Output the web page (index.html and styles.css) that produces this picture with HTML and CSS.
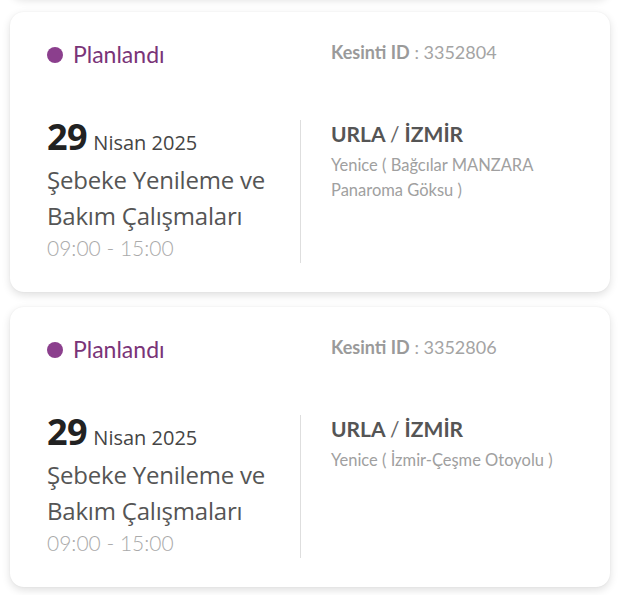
FILE: index.html
```html
<!DOCTYPE html>
<html lang="tr">
<head>
<meta charset="utf-8">
<title>Kesintiler</title>
<link rel="stylesheet" href="styles.css">
</head>
<body>
<div class="list">
  <div class="card card-prev"></div>

  <div class="card">
    <div class="status"><span class="dot"></span><span class="status-text">Planlandı</span></div>
    <div class="kid"><b>Kesinti ID</b> : 3352804</div>
    <div class="when">
      <div class="date"><span class="day">29</span> <span class="month">Nisan 2025</span></div>
      <div class="title">Şebeke Yenileme ve Bakım Çalışmaları</div>
      <div class="time">09:00 - 15:00</div>
    </div>
    <div class="where">
      <div class="city">URLA <span class="slash">/</span> İZMİR</div>
      <div class="addr">Yenice ( Bağcılar MANZARA Panaroma Göksu )</div>
    </div>
  </div>

  <div class="card">
    <div class="status"><span class="dot"></span><span class="status-text">Planlandı</span></div>
    <div class="kid"><b>Kesinti ID</b> : 3352806</div>
    <div class="when">
      <div class="date"><span class="day">29</span> <span class="month">Nisan 2025</span></div>
      <div class="title">Şebeke Yenileme ve Bakım Çalışmaları</div>
      <div class="time">09:00 - 15:00</div>
    </div>
    <div class="where">
      <div class="city">URLA <span class="slash">/</span> İZMİR</div>
      <div class="addr">Yenice ( İzmir-Çeşme Otoyolu )</div>
    </div>
  </div>
</div>
</body>
</html>
```
FILE: styles.css
```css
html, body {
  margin: 0;
  padding: 0;
  background: #ffffff;
}
body {
  font-family: "Lato", "Noto Sans", sans-serif;
  overflow: hidden;
  height: 595px;
}
.list {
  display: flex;
  flex-direction: column;
  gap: 15px;
  padding: 0 8px 0 10px;
  margin-top: -283px;
}
.card {
  background: #fff;
  border-radius: 14px;
  box-shadow: 0 3px 8px rgba(0, 0, 0, 0.13), 0 0 2px rgba(0, 0, 0, 0.05);
  height: 280px;
  box-sizing: border-box;
  padding: 30px 30px 29px 37px;
  display: grid;
  grid-template-columns: 253px 1fr;
  grid-template-rows: 30px 1fr;
  row-gap: 48px;
}
.card-prev {
  display: block;
}
.status {
  display: flex;
  align-items: center;
  gap: 10px;
}
.dot {
  width: 16px;
  height: 16px;
  border-radius: 50%;
  background: #8b3f8d;
  margin-top: -4px;
}
.status-text {
  font-size: 23px;
  color: #7a3478;
  margin-top: -6px;
}
.kid {
  padding-left: 31px;
  font-size: 18px;
  color: #a4a4a4;
  margin-top: -1px;
}
.kid b {
  color: #9a9a9a;
  font-weight: 700;
}
.when {
  font-family: "Open Sans", "Noto Sans", sans-serif;
}
.date {
  line-height: 34px;
  color: #3c3c3c;
}
.day {
  font-size: 36px;
  font-weight: 700;
  color: #222;
  letter-spacing: -0.5px;
  margin-right: 2px;
}
.month {
  font-size: 20px;
  color: #454545;
}
.title {
  font-size: 24px;
  line-height: 36px;
  color: #555;
  margin-top: 1px;
  letter-spacing: -0.2px;
}
.time {
  font-family: "Lato", sans-serif;
  font-size: 21px;
  line-height: 28px;
  color: #aaa;
  font-weight: 300;
}
.where {
  border-left: 1px solid #dedede;
  padding-left: 30px;
}
.city {
  font-size: 21px;
  font-weight: 700;
  color: #555;
  line-height: 28px;
}
.slash {
  font-weight: 400;
  color: #666;
}
.addr {
  font-size: 16.5px;
  line-height: 25px;
  color: #a0a0a0;
  margin-top: 5px;
}
```
